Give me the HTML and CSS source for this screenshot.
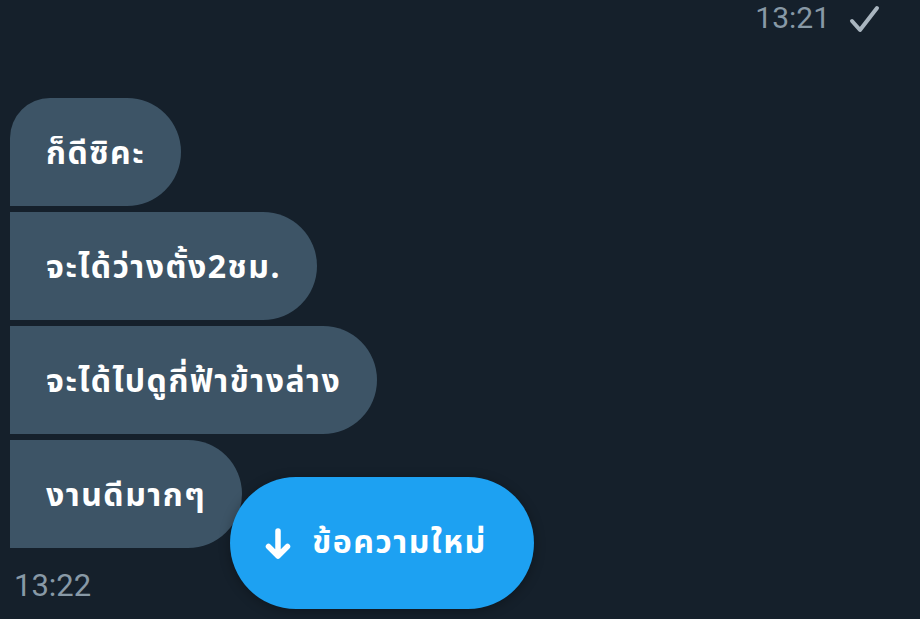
FILE: index.html
```html
<!DOCTYPE html>
<html lang="th">
<head>
<meta charset="utf-8">
<link rel="stylesheet" href="styles.css">
</head>
<body>
<div class="chat">
  <div class="sent-meta">
    <span class="time">13:21</span>
    <svg class="check" viewBox="0 0 32 32" width="32" height="32"><path d="M4 18 L12 27 L29 5" fill="none" stroke="#a9b5bf" stroke-width="4" stroke-linecap="round" stroke-linejoin="round"/></svg>
  </div>
  <div class="group">
    <div class="bubble first">ก็ดีซิคะ</div>
    <div class="bubble">จะได้ว่างตั้ง2ชม.</div>
    <div class="bubble">จะได้ไปดูกี่ฟ้าข้างล่าง</div>
    <div class="bubble last">งานดีมากๆ</div>
  </div>
  <div class="recv-time">13:22</div>
  <button class="new-msg">
    <svg class="arrow" viewBox="0 0 28 32" width="28" height="32"><path d="M14 3 V28 M4.5 18.5 L14 28 L23.5 18.5" fill="none" stroke="#fff" stroke-width="5.5" stroke-linecap="round" stroke-linejoin="round"/></svg>
    <span>ข้อความใหม่</span>
  </button>
</div>
</body>
</html>
```
FILE: styles.css
```css
html, body {
  margin: 0;
  padding: 0;
  background: #15202b;
  height: 100%;
  overflow: hidden;
}
.chat {
  position: relative;
  height: 619px;
  font-family: "Noto Sans", "Noto Sans Thai", sans-serif;
}
.sent-meta {
  display: flex;
  justify-content: flex-end;
  align-items: center;
  gap: 18px;
  padding: 0 40px 0 0;
  height: 34px;
}
.time {
  color: #8899a6;
  font-family: Roboto, sans-serif;
  font-size: 30px;
  font-weight: 400;
}
.check { margin-top: 4px; }
.group {
  display: flex;
  flex-direction: column;
  align-items: flex-start;
  gap: 6px;
  padding: 64px 0 0 10px;
}
.bubble {
  background: #3d5466;
  color: #fff;
  font-size: 32px;
  letter-spacing: 1.5px;
  font-weight: 700;
  line-height: 40px;
  padding: 34px 36px;
  border-radius: 0 54px 54px 0;
}
.bubble.first { border-top-left-radius: 40px; }
.recv-time {
  color: #8899a6;
  font-family: Roboto, sans-serif;
  font-size: 31px;
  font-weight: 400;
  padding: 19px 0 0 14px;
}
.new-msg {
  position: absolute;
  left: 230px;
  top: 477px;
  width: 304px;
  height: 132px;
  border: 0;
  border-radius: 66px;
  background: #1da1f2;
  color: #fff;
  display: flex;
  align-items: center;
  justify-content: center;
  gap: 20px;
  font-family: "Noto Sans", "Noto Sans Thai", sans-serif;
  font-size: 32px;
  letter-spacing: 1.5px;
  font-weight: 700;
  box-shadow: 0 2px 12px rgba(0,0,0,0.3);
  padding: 0 13px 0 0;
}
.arrow { margin-top: 2px; }
```
